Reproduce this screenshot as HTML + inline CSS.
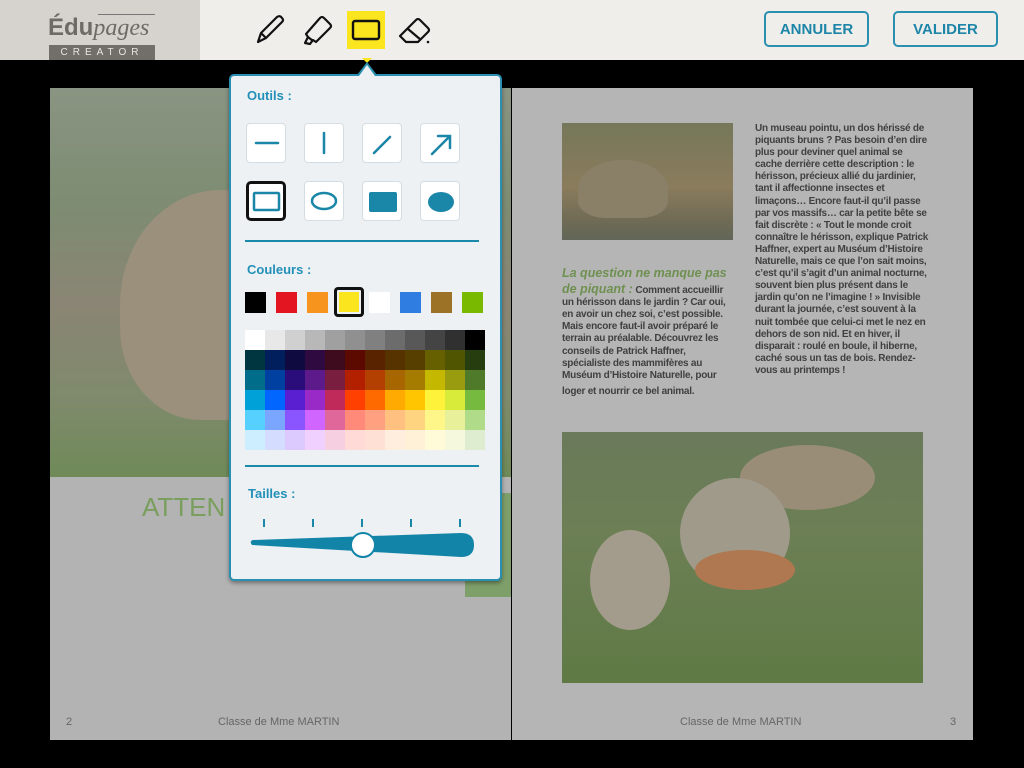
<!DOCTYPE html>
<html><head><meta charset="utf-8"><style>
*{margin:0;padding:0;box-sizing:border-box}
body{width:1024px;height:768px;background:#000;position:relative;overflow:hidden;font-family:"Liberation Sans",sans-serif}
.abs{position:absolute}
.top{left:0;top:0;width:1024px;height:60px;background:#efeeeb}
.logo{left:0;top:0;width:200px;height:60px;background:#d6d3cf}
.btn{top:11px;height:36px;border:2px solid #2a8fb0;border-radius:5px;color:#1d86a8;font-weight:bold;font-size:15px;text-align:center;line-height:34px}
.page{background:#b4b4b4}
.txt{font-size:10px;line-height:12.1px;color:#404040;font-weight:bold;letter-spacing:-0.25px}
.pop{left:229px;top:74px;width:273px;height:507px;background:#edf1f4;border:2px solid #2a8fb0;border-radius:5px;box-shadow:0 2px 4px rgba(0,0,0,.4)}
.lbl{color:#2290b8;font-weight:bold;font-size:13px}
.tb{width:40px;height:40px;background:#fff;border:1px solid #d4dde3;border-radius:4px}
.sw{width:21px;height:21px;top:216px}
</style></head><body>
<div class="abs top"></div>
<div class="abs logo">
 <div class="abs" style="left:98px;top:14px;width:57px;height:1px;background:#777"></div>
 <div class="abs" style="left:48px;top:14px;font-size:24px;color:#6e6a66;font-family:'Liberation Serif',serif"><span style="font-family:'Liberation Sans';font-weight:bold">Édu</span><i>pages</i></div>
 <div class="abs" style="left:49px;top:45px;width:106px;height:15px;background:#726e6a;color:#e8e6e2;font-size:10px;letter-spacing:5px;text-align:center;line-height:15px">CREATOR</div>
</div>
<svg class="abs" style="left:250px;top:10px" width="200" height="40" viewBox="0 0 200 40">
 <path d="M8 32 L11 23 L27 7 Q30 5 32 8 Q34 10 32 12 L16 28 Z M11 23 L16 28" fill="none" stroke="#111" stroke-width="2.2" stroke-linejoin="round"/>
 <path d="M55 33 L58 27 L56 24 L70 8 Q72 6 74 8 L80 14 Q82 16 80 18 L66 32 L63 30 L60 34 Z M58 27 L63 31" fill="none" stroke="#111" stroke-width="2.2" stroke-linejoin="round"/>
 <rect x="97" y="1" width="38" height="38" fill="#fbe51e"/>
 <rect x="103" y="11" width="26" height="18" rx="2" fill="none" stroke="#111" stroke-width="2.4"/>
 <path d="M150 26 L166 10 Q168 8 170 10 L178 18 Q180 20 178 22 L168 32 L156 32 Z M158 19 L171 30" fill="none" stroke="#111" stroke-width="2.2" stroke-linejoin="round"/>
 <circle cx="178" cy="32" r="1.3" fill="#111"/>
</svg>
<div class="abs" style="left:362px;top:58px;width:0;height:0;border-left:5px solid transparent;border-right:5px solid transparent;border-top:5px solid #fbe51e"></div>
<div class="abs btn" style="left:764px;width:105px">ANNULER</div>
<div class="abs btn" style="left:893px;width:105px">VALIDER</div>

<div class="abs page" style="left:50px;top:88px;width:461px;height:652px;background:#b3b3b3"></div>
<div class="abs" style="left:50px;top:88px;width:461px;height:389px;background:linear-gradient(180deg,#8a9482 0%,#7d8c72 30%,#8a8574 55%,#7f8a6c 80%,#6f8a58 100%)"></div>
<div class="abs" style="left:120px;top:190px;width:200px;height:230px;border-radius:50% 40% 30% 40%;background:#9a907c"></div>
<div class="abs" style="left:142px;top:492px;font-size:26px;color:#7a9e5e">ATTEN</div>
<div class="abs" style="left:465px;top:493px;width:46px;height:104px;background:#7f9f6a"></div>
<div class="abs" style="left:66px;top:716px;font-size:11px;color:#666">2</div>
<div class="abs" style="left:218px;top:716px;font-size:11px;color:#666">Classe de Mme MARTIN</div>

<div class="abs page" style="left:512px;top:88px;width:461px;height:652px;background:#b5b5b5"></div>
<div class="abs" style="left:562px;top:123px;width:171px;height:117px;background:linear-gradient(180deg,#76775a,#8a7c5c 55%,#6e6a55 85%,#626658)"></div>
<div class="abs" style="left:578px;top:160px;width:90px;height:58px;border-radius:50% 50% 30% 30%;background:#8a8068"></div>
<div class="abs txt" style="left:755px;top:123px;width:176px">Un museau pointu, un dos hérissé de piquants bruns ? Pas besoin d’en dire plus pour deviner quel animal se cache derrière cette description : le hérisson, précieux allié du jardinier, tant il affectionne insectes et limaçons… Encore faut-il qu’il passe par vos massifs… car la petite bête se fait discrète : « Tout le monde croit connaître le hérisson, explique Patrick Haffner, expert au Muséum d’Histoire Naturelle, mais ce que l’on sait moins, c’est qu’il s’agit d’un animal nocturne, souvent bien plus présent dans le jardin qu’on ne l’imagine ! » Invisible durant la journée, c’est souvent à la nuit tombée que celui-ci met le nez en dehors de son nid. Et en hiver, il disparait : roulé en boule, il hiberne, caché sous un tas de bois. Rendez-vous au printemps !</div>
<div class="abs txt" style="left:562px;top:265px;width:174px"><span style="color:#6e9050;font-weight:bold;font-style:italic;font-size:12.5px;line-height:16px;letter-spacing:0">La question ne manque pas de piquant :</span> Comment accueillir un hérisson dans le jardin ? Car oui, en avoir un chez soi, c’est possible. Mais encore faut-il avoir préparé le terrain au préalable. Découvrez les conseils de Patrick Haffner, spécialiste des mammifères au Muséum d’Histoire Naturelle, pour<br><span style="line-height:20px">loger et nourrir ce bel animal.</span></div>
<div class="abs" style="left:562px;top:432px;width:361px;height:251px;background:linear-gradient(180deg,#6a7a5a,#6c7f55 40%,#5f7a45 100%)"></div>
<div class="abs" style="left:740px;top:445px;width:135px;height:65px;border-radius:50%;background:#9a8d78"></div>
<div class="abs" style="left:680px;top:478px;width:110px;height:110px;border-radius:50%;background:#a09a8a"></div>
<div class="abs" style="left:590px;top:530px;width:80px;height:100px;border-radius:50%;background:#a39c8c"></div>
<div class="abs" style="left:695px;top:550px;width:100px;height:40px;border-radius:50%;background:#b07850"></div>
<div class="abs" style="left:680px;top:716px;font-size:11px;color:#666">Classe de Mme MARTIN</div>
<div class="abs" style="left:950px;top:716px;font-size:11px;color:#666">3</div>

<div class="abs" style="left:357px;top:62px;width:0;height:0;border-left:10px solid transparent;border-right:10px solid transparent;border-bottom:13px solid #2a8fb0"></div>
<div class="abs" style="left:359px;top:65px;width:0;height:0;border-left:8px solid transparent;border-right:8px solid transparent;border-bottom:11px solid #edf1f4;z-index:2"></div>
<div class="abs pop">
 <div class="abs lbl" style="left:16px;top:12px">Outils :</div>
 <div class="abs tb" style="left:15px;top:47px"></div><div class="abs tb" style="left:73px;top:47px"></div><div class="abs tb" style="left:131px;top:47px"></div><div class="abs tb" style="left:189px;top:47px"></div>
 <div class="abs tb" style="left:15px;top:105px;border:3px solid #111;border-radius:5px"></div><div class="abs tb" style="left:73px;top:105px"></div><div class="abs tb" style="left:131px;top:105px"></div><div class="abs tb" style="left:189px;top:105px"></div>
 <svg class="abs" style="left:0;top:0" width="270" height="160">
  <g stroke="#1a86a8" stroke-width="2.5" fill="none" stroke-linecap="round">
   <path d="M25 67 H47"/><path d="M93 57 V77"/><path d="M143 77 L159 61"/><path d="M201 78 L218 61 M207 60 H219 V72"/>
   <rect x="23" y="117" width="25" height="17" rx="1"/><ellipse cx="93" cy="125" rx="12" ry="8"/>
  </g>
  <rect x="138" y="116" width="28" height="20" rx="2" fill="#1a86a8"/><ellipse cx="210" cy="126" rx="13" ry="10" fill="#1a86a8"/>
 </svg>
 <div class="abs" style="left:14px;top:164px;width:234px;height:2px;background:#1a8aaa"></div>
 <div class="abs lbl" style="left:16px;top:186px">Couleurs :</div>
 <div class="abs sw" style="left:14px;background:#000"></div>
 <div class="abs sw" style="left:45px;background:#e31520"></div>
 <div class="abs sw" style="left:76px;background:#f7941e"></div>
 <div class="abs" style="left:103px;top:211px;width:30px;height:30px;border:3px solid #111;border-radius:4px;background:#fbe51e;box-shadow:inset 0 0 0 2px #edf1f4"></div>
 <div class="abs sw" style="left:138px;background:#fff"></div>
 <div class="abs sw" style="left:169px;background:#2f7de1"></div>
 <div class="abs sw" style="left:200px;background:#9b7226"></div>
 <div class="abs sw" style="left:231px;background:#79b900"></div>
 <svg class="abs" style="left:14px;top:254px" width="240" height="120" viewBox="0 0 240 120" shape-rendering="crispEdges">
  <g id="g"></g>
 </svg>
 <div class="abs" style="left:14px;top:389px;width:234px;height:2px;background:#1a8aaa"></div>
 <div class="abs lbl" style="left:17px;top:410px">Tailles :</div>
 <svg class="abs" style="left:0;top:430px" width="270" height="60">
  <g stroke="#1a86a8" stroke-width="2"><path d="M33 13 V21 M82 13 V21 M131 13 V21 M180 13 V21 M229 13 V21"/></g>
  <path d="M21 39 Q18 35 22 34 L230 27 Q243 27 243 39 Q243 51 230 51 Z" fill="#1284a8"/>
  <circle cx="132" cy="39" r="12" fill="#fff" stroke="#1284a8" stroke-width="2"/>
 </svg>
</div>
<script>
var rows=[["fff","e8e8e8","d0d0d0","b8b8b8","a0a0a0","909090","808080","6c6c6c","585858","444","303030","000"],
["003640","001f5c","0f0a40","2e0a40","3e0a1e","5c0a00","5a2300","573300","573f00","666000","4f5500","263e0f"],
["006d8a","0040a0","2a0d7a","5c1a8a","7a1e40","b32000","b34000","a86600","a67c00","c4b800","9a9c10","4e7a2a"],
["00a0d8","0066ff","5a1fd0","9a2ac8","c02a5a","ff4000","ff6a00","ffaa00","ffc500","fff23a","d8ea3a","76bb40"],
["55d0ff","7aa6ff","8a55ff","d066ff","e0679a","ff8a7a","ffa080","ffc080","ffd480","fff68a","e8f09a","b0dc8a"],
["cdeeff","d4ddff","dccaff","efd0ff","f6d0e0","ffdad6","ffe0d4","ffeedd","fff0d8","fffbd8","f5f8dc","deedd0"]];
var s="";rows.forEach(function(r,i){r.forEach(function(c,j){s+='<rect x="'+j*20+'" y="'+i*20+'" width="20" height="20" fill="#'+c+'"/>';});});
document.getElementById("g").innerHTML=s;
</script>
</body></html>
